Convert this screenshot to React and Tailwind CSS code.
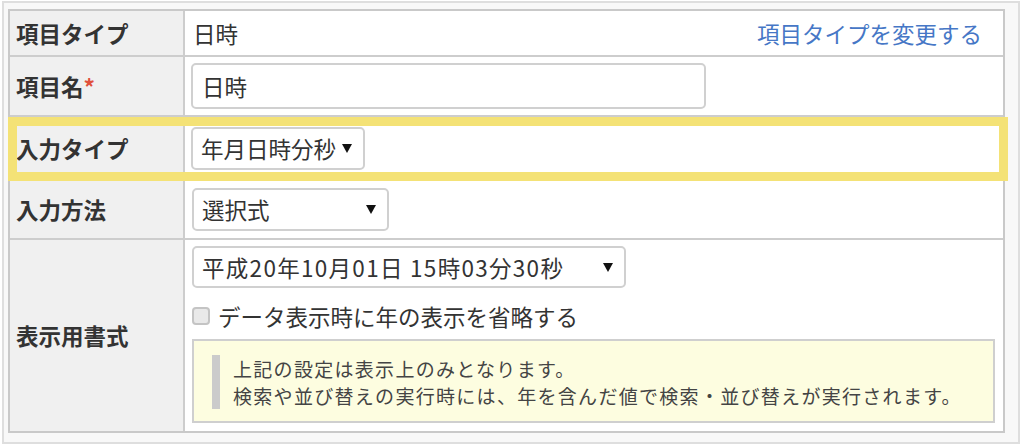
import React from 'react'

const font = { fontFamily: '"Noto Sans CJK JP", "Noto Sans", sans-serif' }

function Arrow() {
  return (
    <svg width="10" height="9" viewBox="0 0 10 9" className="shrink-0">
      <path d="M0 0 H10 L5 9 Z" fill="#111" />
    </svg>
  )
}

function Select({ width, height, children, wide }) {
  return (
    <div
      className="flex items-center justify-between rounded-[5px] border-2 border-[#d0d0d0] bg-white pl-[8px] pr-[11px]"
      style={{ width, height }}
    >
      <span className={wide ? 'tracking-[1.3px]' : ''}>{children}</span>
      <Arrow />
    </div>
  )
}

function Row({ label, required, height, last, children }) {
  return (
    <div
      className={`flex ${last ? '' : 'border-b-2 border-[#cdcdcd]'}`}
      style={{ height }}
    >
      <div className="w-[175px] shrink-0 bg-[#f0f0f0] border-r-2 border-[#cdcdcd] flex items-center pl-[6px] font-bold text-[22.5px] text-[#333]">
        {label}
        {required && <span className="text-[#e0503c]">*</span>}
      </div>
      <div className="flex-1 min-w-0 flex items-center pl-[6px]">{children}</div>
    </div>
  )
}

export default function App() {
  return (
    <div className="relative w-[1022px] h-[447px] bg-white pt-[1px] pl-[2px] overflow-hidden" style={font}>
      <div className="w-[1018px] h-[443px] border-2 border-[#dedede] bg-[#f8f8f8] pl-[4px] pt-[6px]">
        <div className="w-[997px] border-2 border-[#c9c9c9] bg-white text-[22.5px] text-[#333] leading-none">
          <Row label="項目タイプ" height={46}>
            <div className="flex w-full items-center justify-between pl-[2px] pr-[21px]">
              <span>日時</span>
              <span className="text-[#4677c6]">項目タイプを変更する</span>
            </div>
          </Row>
          <Row label="項目名" required height={60}>
            <div className="w-[515px] h-[46px] rounded-[5px] border-2 border-[#d0d0d0] bg-white flex items-center pl-[9px]">
              日時
            </div>
          </Row>
          <Row label="入力タイプ" height={64}>
            <Select width={174} height={43}>年月日時分秒</Select>
          </Row>
          <Row label="入力方法" height={59}>
            <div className="pl-[1px]">
              <Select width={197} height={43}>選択式</Select>
            </div>
          </Row>
          <Row label="表示用書式" height={191} last>
            <div className="flex flex-col self-start pt-[6px] pl-[1px]">
              <Select width={434} height={42} wide>平成20年10月01日 15時03分30秒</Select>
              <div className="mt-[19px] flex items-center gap-[8px] h-[18px]">
                <div className="w-[18px] h-[18px] rounded-[4px] border-2 border-[#c4c4c4] bg-[#e9e9e9]" />
                <span>データ表示時に年の表示を省略する</span>
              </div>
              <div className="mt-[14px] w-[803px] h-[84px] border-2 border-[#cfcfcf] bg-[#fdfde0] pl-[18px] pt-[14px]">
                <div className="border-l-[8px] border-[#cbcbcb] pl-[13px] text-[19px] tracking-[1.3px] leading-[27px] text-[#444]">
                  <div>上記の設定は表示上のみとなります。</div>
                  <div>検索や並び替えの実行時には、年を含んだ値で検索・並び替えが実行されます。</div>
                </div>
              </div>
            </div>
          </Row>
        </div>
      </div>
      <div className="absolute left-[8px] top-[117px] w-[1000px] h-[64px] border-[9px] border-[#f4e276] pointer-events-none" />
    </div>
  )
}
